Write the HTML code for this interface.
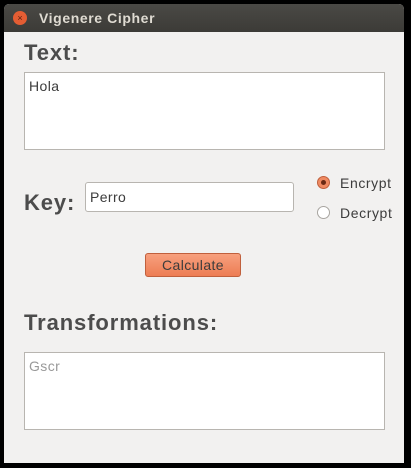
<!DOCTYPE html><html><head><style>
body{margin:0;width:411px;height:468px;background:#000;position:relative;overflow:hidden;font-family:"Liberation Sans",sans-serif}
.win{position:absolute;left:4px;top:4px;width:400px;height:459px;background:#f2f1f0;border-radius:5px 5px 0 0;overflow:hidden}
.tb{position:absolute;left:0;top:0;width:400px;height:28px;background:linear-gradient(#4a4945,#3c3b37);}
.close{position:absolute;left:9px;top:7px;width:14px;height:14px;border-radius:50%;background:#e45d33;color:#5a2010;font-size:9px;text-align:center;line-height:14px}
.tt{position:absolute;left:35px;top:6px;color:#dfdbd2;font-weight:bold;font-size:14px;letter-spacing:0.6px}
.a{position:absolute}
h{position:absolute;font-weight:bold;color:#4c4c4c;font-size:22px;letter-spacing:0.9px}
.box{position:absolute;background:#fff;border:1px solid #b8b5b0;box-sizing:border-box;font-size:14px;color:#3c3c3c;padding:5px 4px;letter-spacing:0.4px}
.r{position:absolute;width:13px;height:13px;border-radius:50%;box-sizing:border-box}
.l{position:absolute;font-size:14px;color:#3c3c3c;letter-spacing:0.6px}
</style></head><body><div class="win">
<div class="tb"><div class="close">×</div><div class="tt">Vigenere Cipher</div></div>
<h style="left:20px;top:36px">Text:</h>
<div class="box" style="left:20px;top:68px;width:361px;height:78px">Hola</div>
<h style="left:20px;top:186px">Key:</h>
<div class="box" style="left:81px;top:178px;width:209px;height:30px;border-radius:3px;padding:6px 4px">Perro</div>
<div class="r" style="left:313px;top:172px;background:#ef8a62;border:1px solid #c0603d"><div style="width:5px;height:5px;border-radius:50%;background:#6b2a15;margin:3px"></div></div>
<div class="l" style="left:336px;top:171px">Encrypt</div>
<div class="r" style="left:313px;top:202px;background:#fff;border:1px solid #a8a5a0"></div>
<div class="l" style="left:336px;top:201px">Decrypt</div>
<div class="a" style="left:141px;top:249px;width:96px;height:24px;border-radius:3px;background:linear-gradient(#f7a07e,#ed7d54);border:1px solid #c0603d;box-sizing:border-box;text-align:center;font-size:14px;line-height:22px;color:#3c3c3c;letter-spacing:0.4px">Calculate</div>
<h style="left:20px;top:306px">Transformations:</h>
<div class="box" style="left:20px;top:348px;width:361px;height:78px;color:#999">Gscr</div>
</div></body></html>
